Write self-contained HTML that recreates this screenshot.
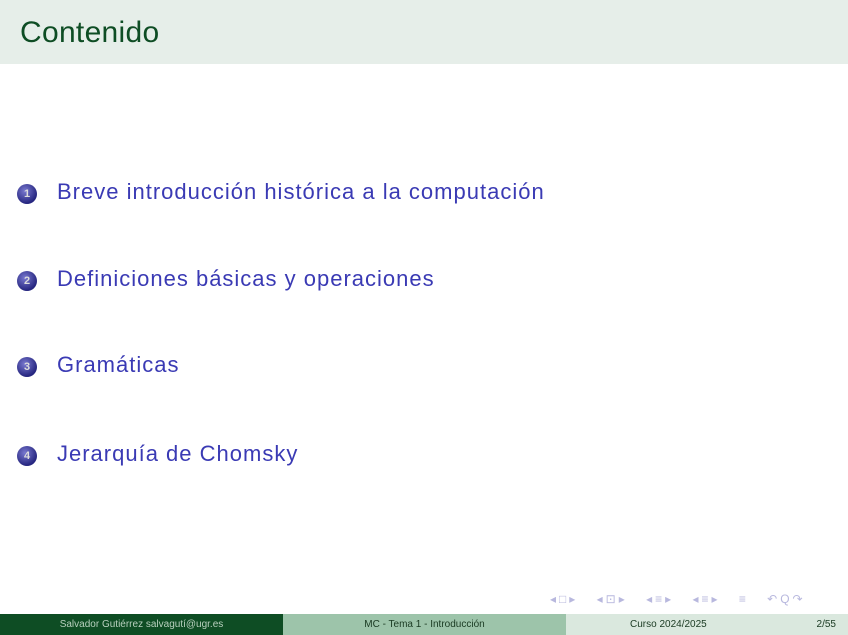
<!DOCTYPE html>
<html><head><meta charset="utf-8"><style>
body{margin:0;width:848px;height:635px;position:relative;background:#fff;font-family:"Liberation Sans",sans-serif;overflow:hidden}
.hdr{position:absolute;left:0;top:0;width:848px;height:64px;background:#e6eee9}
.hdr span{position:absolute;left:20px;top:16px;font-size:30px;color:#0e4d24;letter-spacing:0.3px}
.item{position:absolute;left:17px;font-size:22px;color:#3a3ab4;letter-spacing:1px}
.ball{display:inline-block;width:20px;height:20px;border-radius:50%;background:radial-gradient(circle at 40% 35%,#7a7ad0,#262680 70%);color:#ddd;font-size:11px;text-align:center;line-height:20px;vertical-align:2px;margin-right:20px;font-weight:bold;letter-spacing:0}
.foot{position:absolute;top:614px;height:21px;font-size:10px;line-height:21px}
.nav{position:absolute;top:592px;left:550px;font-size:12px;color:#b8b8de;letter-spacing:3px;word-spacing:12px}
</style></head><body>
<div class="hdr"><span>Contenido</span></div>
<div class="item" style="top:179px"><span class="ball">1</span>Breve introducción histórica a la computación</div>
<div class="item" style="top:266px"><span class="ball">2</span>Definiciones básicas y operaciones</div>
<div class="item" style="top:352px"><span class="ball">3</span>Gramáticas</div>
<div class="item" style="top:441px"><span class="ball">4</span>Jerarquía de Chomsky</div>
<div class="nav">◂□▸ ◂⊡▸ ◂≡▸ ◂≡▸ ≡ ↶Q↷</div>
<div class="foot" style="left:0;width:283px;background:#0e4d24;color:#b8d0be;text-align:center">Salvador Gutiérrez salvagutí@ugr.es</div>
<div class="foot" style="left:283px;width:283px;background:#9dc4aa;color:#1a3a22;text-align:center">MC - Tema 1 - Introducción</div>
<div class="foot" style="left:566px;width:282px;background:#dae8de;color:#1a3a22"><span style="position:absolute;left:64px">Curso 2024/2025</span><span style="position:absolute;right:12px">2/55</span></div>
</body></html>
